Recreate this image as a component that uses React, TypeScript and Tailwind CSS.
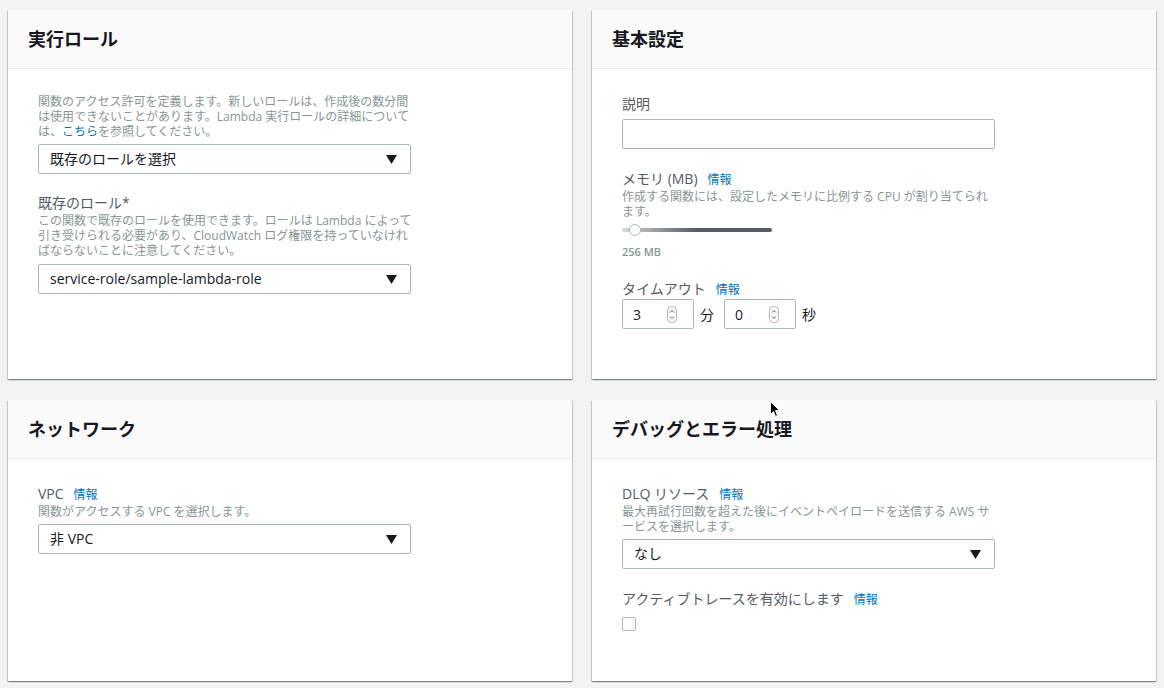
import React from 'react';

const font = { fontFamily: '"Open Sans", "Noto Sans CJK JP", sans-serif' };

const Card = ({ title, children }: { title: string; children: React.ReactNode }) => (
  <div className="bg-white shadow-[0_1px_1px_0_rgba(0,28,36,0.3),1px_1px_1px_0_rgba(0,28,36,0.15),-1px_1px_1px_0_rgba(0,28,36,0.15)]">
    <div className="h-[59px] bg-[#fafafa] border-b border-[#eaeded] px-[20px] flex items-center text-[18px] font-bold text-[#16191f]">
      {title}
    </div>
    <div className="px-[30px] pt-[25px]">{children}</div>
  </div>
);

const Info = () => <span className="ml-[10px] text-[12px] leading-none text-[#0073bb]">情報</span>;

const Label = ({ children, info }: { children: React.ReactNode; info?: boolean }) => (
  <div className="h-[20px] text-[14px] leading-[20px] text-[#545b64] whitespace-nowrap">
    <span>{children}</span>
    {info && <Info />}
  </div>
);

const Desc = ({ children }: { children: React.ReactNode }) => (
  <div className="text-[12px] leading-[15px] text-[#879596] whitespace-nowrap">{children}</div>
);

const Select = ({ value, className = '' }: { value: string; className?: string }) => (
  <div className={`w-[373px] h-[30px] border border-[#aab7b8] rounded-[2px] flex items-center justify-between pl-[11px] pr-[13px] text-[14px] text-[#16191f] ${className}`}>
    <span className="pb-[2px]">{value}</span>
    <svg width="11" height="9" viewBox="0 0 11 9">
      <path d="M0 0 L11 0 L5.5 9 Z" fill="#16191f" />
    </svg>
  </div>
);

const Spinner = () => (
  <svg width="10" height="17" viewBox="0 0 10 17">
    <rect x="0.5" y="0.5" width="9" height="16" rx="4" fill="#fff" stroke="#aab7b8" />
    <path d="M3 6.5 L5 4.5 L7 6.5" fill="none" stroke="#545b64" strokeWidth="1" />
    <path d="M3 10.5 L5 12.5 L7 10.5" fill="none" stroke="#545b64" strokeWidth="1" />
  </svg>
);

const NumberInput = ({ value }: { value: string }) => (
  <div className="w-[72px] h-[30px] border border-[#aab7b8] rounded-[2px] flex items-center justify-between pl-[10px] pr-[16px] text-[14px] text-[#16191f]">
    <span>{value}</span>
    <Spinner />
  </div>
);

export default function App() {
  return (
    <div className="relative w-[1164px] h-[688px] overflow-hidden bg-[#f2f3f3]" style={font}>
      <div className="grid grid-cols-2 grid-rows-[369px_281px] gap-x-[20px] gap-y-[21px] px-[8px] pt-[10px]">
        {/* 実行ロール */}
        <Card title="実行ロール">
          <Desc>
            関数のアクセス許可を定義します。新しいロールは、作成後の数分間
            <br />
            は使用できないことがあります。Lambda 実行ロールの詳細について
            <br />
            は、<span className="text-[#0073bb]">こちら</span>を参照してください。
          </Desc>
          <Select value="既存のロールを選択" className="mt-[5px]" />
          <div className="mt-[19px]">
            <Label>既存のロール*</Label>
          </div>
          <Desc>
            この関数で既存のロールを使用できます。ロールは Lambda によって
            <br />
            引き受けられる必要があり、CloudWatch ログ権限を持っていなけれ
            <br />
            ばならないことに注意してください。
          </Desc>
          <Select value="service-role/sample-lambda-role" className="mt-[6px]" />
        </Card>

        {/* 基本設定 */}
        <Card title="基本設定">
          <Label>説明</Label>
          <div className="mt-[5px] w-[373px] h-[30px] border border-[#aab7b8] rounded-[2px]" />
          <div className="mt-[20px]">
            <Label info>メモリ (MB)</Label>
          </div>
          <Desc>
            作成する関数には、設定したメモリに比例する CPU が割り当てられ
            <br />
            ます。
          </Desc>
          <div className="relative mt-[5px] w-[150px] h-[12px] flex items-center">
            <div className="h-[4px] w-full rounded-full bg-gradient-to-r from-[#d5dbdb] via-[#545b64] to-[#545b64]" />
            <div className="absolute left-[7px] top-0 w-[12px] h-[12px] rounded-full bg-white border border-[#aab7b8]" />
          </div>
          <div className="mt-[8px] text-[11px] leading-[15px] font-semibold text-[#879596]">256 MB</div>
          <div className="mt-[20px]">
            <Label info>タイムアウト</Label>
          </div>
          <div className="flex items-center text-[14px] text-[#16191f]">
            <NumberInput value="3" />
            <span className="ml-[6px] mr-[10px]">分</span>
            <NumberInput value="0" />
            <span className="ml-[6px]">秒</span>
          </div>
        </Card>

        {/* ネットワーク */}
        <Card title="ネットワーク">
          <Label info>VPC</Label>
          <Desc>関数がアクセスする VPC を選択します。</Desc>
          <Select value="非 VPC" className="mt-[5px]" />
        </Card>

        {/* デバッグとエラー処理 */}
        <Card title="デバッグとエラー処理">
          <Label info>DLQ リソース</Label>
          <Desc>
            最大再試行回数を超えた後にイベントペイロードを送信する AWS サ
            <br />
            ービスを選択します。
          </Desc>
          <Select value="なし" className="mt-[5px]" />
          <div className="mt-[20px]">
            <Label info>アクティブトレースを有効にします</Label>
          </div>
          <div className="mt-[8px] w-[14px] h-[14px] border border-[#aab7b8] rounded-[2px] bg-white" />
        </Card>
      </div>

      {/* mouse cursor */}
      <svg className="absolute left-[770px] top-[401px]" width="11" height="17" viewBox="0 0 11 17">
        <path d="M0.5 0.5 L0.5 13.5 L3.5 10.5 L5.5 15.5 L7.5 14.5 L5.5 9.5 L9.5 9.5 Z" fill="#000" stroke="#fff" strokeWidth="1" />
      </svg>
    </div>
  );
}
